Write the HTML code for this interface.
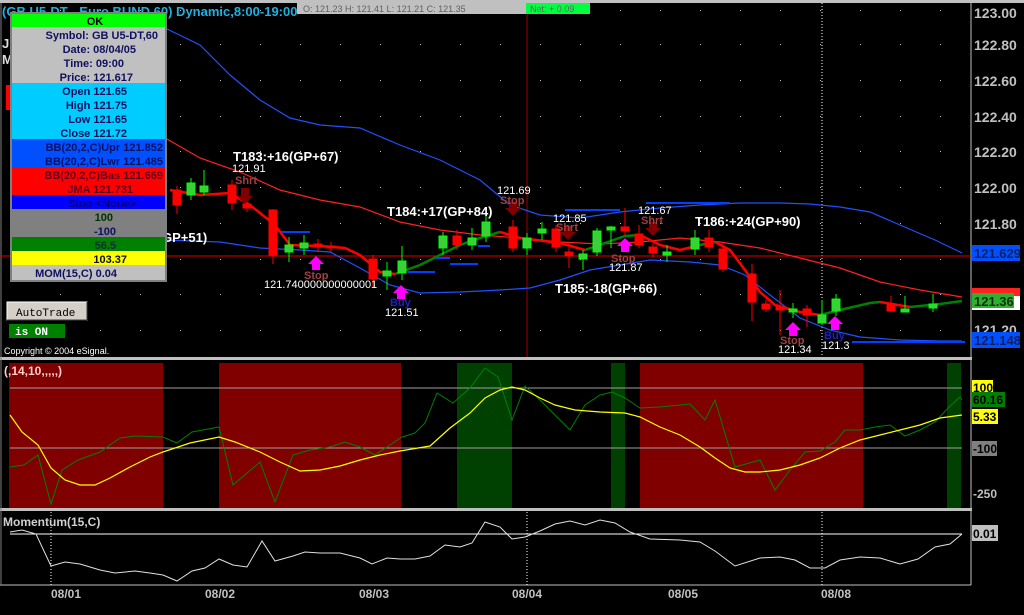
<!DOCTYPE html>
<html><head><meta charset="utf-8"><style>
html,body{margin:0;padding:0;background:#000;width:1024px;height:615px;overflow:hidden;font-family:"Liberation Sans",sans-serif}
svg{display:block}
</style></head><body>
<svg width="1024" height="615" viewBox="0 0 1024 615" xmlns="http://www.w3.org/2000/svg" font-family="Liberation Sans, sans-serif">
<rect width="1024" height="615" fill="#000"/>
<rect x="0" y="0" width="1024" height="3" fill="#c0c0c0"/>
<line x1="971" y1="3" x2="971" y2="585" stroke="#c0c0c0" stroke-width="1"/>
<rect x="0" y="357" width="972" height="3" fill="#c0c0c0"/>
<rect x="0" y="508" width="972" height="3" fill="#c0c0c0"/>
<line x1="0" y1="585" x2="971" y2="585" stroke="#c0c0c0"/>
<line x1="1" y1="3" x2="1" y2="585" stroke="#808080"/>

<rect x="9" y="363" width="154" height="145" fill="#800000"/>
<rect x="219" y="363" width="182" height="145" fill="#800000"/>
<rect x="457" y="363" width="55" height="145" fill="#004000"/>
<rect x="611" y="363" width="14" height="145" fill="#004000"/>
<rect x="640" y="363" width="223" height="145" fill="#800000"/>
<rect x="947" y="363" width="14" height="145" fill="#004000"/>
<line x1="10" y1="388" x2="962" y2="388" stroke="#a0a0a0"/>
<line x1="10" y1="448" x2="962" y2="448" stroke="#a0a0a0"/>

<g fill="#c0c0c0">
<g id="dr">
<rect x="60" y="0" width="1" height="1"/><rect x="100" y="0" width="1" height="1"/><rect x="140" y="0" width="1" height="1"/><rect x="180" y="0" width="1" height="1"/><rect x="220" y="0" width="1" height="1"/><rect x="260" y="0" width="1" height="1"/><rect x="300" y="0" width="1" height="1"/><rect x="340" y="0" width="1" height="1"/><rect x="380" y="0" width="1" height="1"/><rect x="420" y="0" width="1" height="1"/><rect x="460" y="0" width="1" height="1"/><rect x="500" y="0" width="1" height="1"/><rect x="540" y="0" width="1" height="1"/><rect x="580" y="0" width="1" height="1"/><rect x="620" y="0" width="1" height="1"/><rect x="660" y="0" width="1" height="1"/><rect x="700" y="0" width="1" height="1"/><rect x="740" y="0" width="1" height="1"/><rect x="780" y="0" width="1" height="1"/><rect x="820" y="0" width="1" height="1"/><rect x="860" y="0" width="1" height="1"/><rect x="900" y="0" width="1" height="1"/><rect x="940" y="0" width="1" height="1"/>
</g>
<use href="#dr" y="10"/><use href="#dr" y="44"/><use href="#dr" y="80"/><use href="#dr" y="116"/><use href="#dr" y="151"/><use href="#dr" y="187"/><use href="#dr" y="223"/><use href="#dr" y="259"/><use href="#dr" y="294"/><use href="#dr" y="330"/>
</g>
<line x1="527" y1="14" x2="527" y2="357" stroke="#a00000"/>
<line x1="527" y1="512" x2="527" y2="585" stroke="#fff" stroke-dasharray="1,2"/>
<line x1="822" y1="3" x2="822" y2="357" stroke="#fff" stroke-dasharray="1,2"/>
<line x1="822" y1="512" x2="822" y2="585" stroke="#fff" stroke-dasharray="1,2"/>
<line x1="51" y1="512" x2="51" y2="585" stroke="#fff" stroke-dasharray="1,2"/>
<line x1="0" y1="256" x2="971" y2="256" stroke="#e00000"/>

<polyline fill="none" stroke="#2050ff" stroke-width="1.2" points="165,28 200,45 230,75 260,100 290,118 320,125 360,128 400,145 440,160 480,180 510,205 540,215 580,218 620,212 660,208 700,205 740,203 780,203 810,204 840,207 870,212 900,225 935,240 962,253"/>
<polyline fill="none" stroke="#ff2020" stroke-width="1.2" points="160,135 200,158 240,172 280,190 320,200 360,207 400,222 440,230 480,235 520,238 560,242 600,244 640,242 680,238 720,242 760,248 800,258 840,268 880,282 920,290 962,297"/>
<polyline fill="none" stroke="#2050ff" stroke-width="1.2" points="165,240 220,242 260,248 300,250 330,252 360,268 390,285 420,293 460,292 500,290 530,288 560,280 590,270 620,265 650,260 690,262 720,265 745,275 770,295 800,318 830,330 860,337 900,340 940,341 962,341"/>
<g stroke="#0040ff" stroke-width="2">
<line x1="280" y1="232" x2="310" y2="232"/><line x1="408" y1="272" x2="435" y2="272"/><line x1="436" y1="258" x2="450" y2="258"/><line x1="450" y1="264" x2="478" y2="264"/><line x1="478" y1="246" x2="490" y2="246"/>
<line x1="565" y1="210" x2="620" y2="210"/><line x1="646" y1="203" x2="730" y2="203"/><line x1="852" y1="342" x2="965" y2="342"/>
</g>
<polyline fill="none" stroke="#ff0000" stroke-width="2.5" points="170,190 200,195 230,193 250,205 275,225 290,245 320,246 345,248 360,255 380,272 395,274"/>
<polyline fill="none" stroke="#008000" stroke-width="2.5" points="395,274 420,265 440,255 460,245 480,238 500,232"/>
<polyline fill="none" stroke="#ff0000" stroke-width="2.5" points="500,232 520,238 560,243 585,250"/>
<polyline fill="none" stroke="#008000" stroke-width="2.5" points="585,250 605,243 625,236 640,235"/>
<polyline fill="none" stroke="#ff0000" stroke-width="2.5" points="640,235 660,245 680,250 700,245"/>
<polyline fill="none" stroke="#008000" stroke-width="2.5" points="700,245 715,242"/>
<polyline fill="none" stroke="#ff0000" stroke-width="2.5" points="715,242 730,250 745,270 760,292 775,305 800,312 820,315"/>
<polyline fill="none" stroke="#008000" stroke-width="2.5" points="820,315 840,310 870,303 880,302"/>
<polyline fill="none" stroke="#ff0000" stroke-width="2.5" points="880,302 910,307"/>
<polyline fill="none" stroke="#008000" stroke-width="2.5" points="910,307 940,304 962,301"/>

<g stroke-width="1">
<g stroke="#00ff00" fill="#3bd03b">
<line x1="191" y1="178" x2="191" y2="200"/><rect x="187" y="183" width="8" height="12"/>
<line x1="204" y1="170" x2="204" y2="195"/><rect x="200" y="186" width="8" height="6"/>
<line x1="289" y1="237" x2="289" y2="262"/><rect x="285" y="245" width="8" height="7"/>
<line x1="304" y1="235" x2="304" y2="255"/><rect x="300" y="243" width="8" height="5"/>
<line x1="387" y1="262" x2="387" y2="290"/><rect x="383" y="271" width="8" height="5"/>
<line x1="402" y1="246" x2="402" y2="280"/><rect x="398" y="261" width="8" height="12"/>
<line x1="443" y1="232" x2="443" y2="255"/><rect x="439" y="236" width="8" height="12"/>
<line x1="472" y1="228" x2="472" y2="250"/><rect x="468" y="238" width="8" height="7"/>
<line x1="486" y1="214" x2="486" y2="242"/><rect x="482" y="222" width="8" height="14"/>
<line x1="527" y1="233" x2="527" y2="255"/><rect x="523" y="238" width="8" height="10"/>
<line x1="542" y1="222" x2="542" y2="240"/><rect x="538" y="229" width="8" height="4"/>
<line x1="583" y1="250" x2="583" y2="270"/><rect x="579" y="254" width="8" height="5"/>
<line x1="597" y1="228" x2="597" y2="256"/><rect x="593" y="231" width="8" height="21"/>
<line x1="611" y1="226" x2="611" y2="248"/><rect x="607" y="227" width="8" height="3"/>
<line x1="667" y1="245" x2="667" y2="262"/><rect x="663" y="252" width="8" height="3"/>
<line x1="695" y1="230" x2="695" y2="255"/><rect x="691" y="238" width="8" height="11"/>
<line x1="793" y1="303" x2="793" y2="318"/><rect x="789" y="309" width="8" height="3"/>
<line x1="822" y1="300" x2="822" y2="325"/><rect x="818" y="315" width="8" height="8"/>
<line x1="836" y1="294" x2="836" y2="316"/><rect x="832" y="299" width="8" height="12"/>
<line x1="905" y1="296" x2="905" y2="312"/><rect x="901" y="309" width="8" height="3"/>
<line x1="933" y1="294" x2="933" y2="312"/><rect x="929" y="304" width="8" height="4"/>
</g>
<g stroke="#ff0000" fill="#ff0000">
<line x1="177" y1="186" x2="177" y2="214"/><rect x="173" y="190" width="8" height="15"/>
<line x1="232" y1="180" x2="232" y2="210"/><rect x="228" y="185" width="8" height="18"/>
<line x1="247" y1="196" x2="247" y2="212"/><rect x="243" y="204" width="8" height="4"/>
<line x1="273" y1="209" x2="273" y2="264"/><rect x="269" y="210" width="8" height="45"/>
<line x1="318" y1="239" x2="318" y2="252"/><rect x="314" y="244" width="8" height="3"/>
<line x1="331" y1="242" x2="331" y2="252"/><rect x="327" y="246" width="8" height="2"/>
<line x1="373" y1="255" x2="373" y2="288"/><rect x="369" y="259" width="8" height="20"/>
<line x1="457" y1="230" x2="457" y2="250"/><rect x="453" y="236" width="8" height="9"/>
<line x1="513" y1="220" x2="513" y2="252"/><rect x="509" y="227" width="8" height="21"/>
<line x1="556" y1="225" x2="556" y2="252"/><rect x="552" y="229" width="8" height="18"/>
<line x1="569" y1="248" x2="569" y2="268"/><rect x="565" y="252" width="8" height="4"/>
<line x1="625" y1="208" x2="625" y2="235"/><rect x="621" y="227" width="8" height="4"/>
<line x1="639" y1="225" x2="639" y2="248"/><rect x="635" y="234" width="8" height="11"/>
<line x1="653" y1="244" x2="653" y2="258"/><rect x="649" y="247" width="8" height="6"/>
<line x1="709" y1="230" x2="709" y2="252"/><rect x="705" y="238" width="8" height="9"/>
<line x1="723" y1="245" x2="723" y2="272"/><rect x="719" y="249" width="8" height="20"/>
<line x1="752" y1="264" x2="752" y2="321"/><rect x="748" y="274" width="8" height="28"/>
<line x1="766" y1="300" x2="766" y2="312"/><rect x="762" y="304" width="8" height="5"/>
<line x1="780" y1="290" x2="780" y2="335"/><rect x="776" y="307" width="8" height="3"/>
<line x1="807" y1="305" x2="807" y2="327"/><rect x="803" y="309" width="8" height="6"/>
<line x1="891" y1="296" x2="891" y2="312"/><rect x="887" y="304" width="8" height="7"/>
</g>
</g>

<g fill="#ff00ff">
<polygon points="316,256 324,264 320,264 320,270 312,270 312,264 308,264"/>
<polygon points="401,285 409,293 405,293 405,299 397,299 397,293 393,293"/>
<polygon points="625,238 633,246 629,246 629,252 621,252 621,246 617,246"/>
<polygon points="793,322 801,330 797,330 797,336 789,336 789,330 785,330"/>
<polygon points="835,316 843,324 839,324 839,330 831,330 831,324 827,324"/>
</g>
<g fill="#800000">
<polygon points="245,204 253,196 249,196 249,188 241,188 241,196 237,196"/>
<polygon points="513,216 521,208 517,208 517,202 509,202 509,208 505,208"/>
<polygon points="568,240 576,232 572,232 572,226 564,226 564,232 560,232"/>
<polygon points="653,236 661,228 657,228 657,222 649,222 649,228 645,228"/>
</g>
<g font-size="11" fill="#fff">
<text x="232" y="172">121.91</text><text x="497" y="194">121.69</text><text x="553" y="222">121.85</text><text x="638" y="214">121.67</text>
<text x="264" y="288">121.740000000000001</text><text x="385" y="316">121.51</text><text x="609" y="271">121.87</text>
<text x="778" y="353">121.34</text><text x="822" y="349">121.3</text>
</g>
<g font-size="11" font-weight="bold" fill="#a04040">
<text x="235" y="184">Shrt</text><text x="500" y="204">Stop</text><text x="556" y="231">Shrt</text><text x="641" y="224">Shrt</text>
<text x="304" y="279">Stop</text><text x="611" y="262">Stop</text><text x="780" y="344">Stop</text>
</g>
<g font-size="11" font-weight="bold" fill="#2020c0"><text x="390" y="306">Buy</text><text x="824" y="339">Buy</text></g>
<g font-size="13" font-weight="bold" fill="#fff">
<text x="233" y="161">T183:+16(GP+67)</text><text x="387" y="216">T184:+17(GP+84)</text>
<text x="555" y="293">T185:-18(GP+66)</text><text x="695" y="226">T186:+24(GP+90)</text>
<text x="162" y="242">GP+51)</text>
</g>
<text x="4" y="354" font-size="9" fill="#fff">Copyright © 2004 eSignal.</text>

<text x="2" y="16" font-size="13" font-weight="bold" fill="#20b0e0">(GB U5-DT - Euro BUND 60) Dynamic,8:00-19:00</text>
<rect x="297" y="3" width="229" height="11" fill="#c0c0c0"/>
<text x="303" y="12" font-size="9" fill="#606060">O: 121.23     H: 121.41     L: 121.21     C: 121.35</text>
<rect x="526" y="3" width="64" height="11" fill="#00ff40"/>
<text x="530" y="12" font-size="9" fill="#606060">Net: + 0.09</text>
<text x="2" y="48" font-size="13" font-weight="bold" fill="#ddd">J</text>
<text x="2" y="64" font-size="13" font-weight="bold" fill="#ddd">M</text>
<rect x="6" y="85" width="5" height="25" fill="#ff0000"/>

<rect x="10" y="12" width="157" height="270" fill="#808080"/>
<g font-size="11" font-weight="bold" text-anchor="end">
<rect x="12" y="14" width="153" height="13" fill="#00ff00"/><text x="95" y="25" fill="#000" text-anchor="middle">OK</text>
<rect x="12" y="27" width="153" height="56" fill="#c0c0c0"/>
<text x="158" y="39" fill="#101060">Symbol: GB U5-DT,60</text>
<text x="136" y="53" fill="#101060">Date: 08/04/05</text>
<text x="124" y="67" fill="#101060">Time: 09:00</text>
<text x="133" y="81" fill="#101060">Price: 121.617</text>
<rect x="12" y="83" width="153" height="56" fill="#00ccff"/>
<text x="127" y="95" fill="#101060">Open 121.65</text><text x="127" y="109" fill="#101060">High 121.75</text>
<text x="127" y="123" fill="#101060">Low 121.65</text><text x="127" y="137" fill="#101060">Close 121.72</text>
<rect x="12" y="139" width="153" height="28" fill="#0050ff"/>
<text x="163" y="151" fill="#101060">BB(20,2,C)Upr 121.852</text><text x="163" y="165" fill="#101060">BB(20,2,C)Lwr 121.485</text>
<rect x="12" y="167" width="153" height="28" fill="#ff0000"/>
<text x="163" y="179" fill="#600020">BB(20,2,C)Bas 121.669</text><text x="133" y="193" fill="#600020">JMA 121.731</text>
<rect x="12" y="195" width="153" height="14" fill="#0000ff"/><text x="136" y="207" fill="#000080">Stop &lt;None&gt;</text>
<rect x="12" y="209" width="153" height="28" fill="#808080"/>
<text x="113" y="221" fill="#003000">100</text><text x="116" y="235" fill="#101060">-100</text>
<rect x="12" y="237" width="153" height="14" fill="#008000"/><text x="116" y="249" fill="#103030">56.5</text>
<rect x="12" y="251" width="153" height="14" fill="#ffff00"/><text x="127" y="263" fill="#101010">103.37</text>
<rect x="12" y="265" width="153" height="15" fill="#c0c0c0"/><text x="117" y="277" fill="#101060">MOM(15,C) 0.04</text>
</g>

<rect x="7" y="302" width="80" height="18" fill="#d4d0c8" stroke="#fff"/>
<line x1="7" y1="320" x2="87" y2="320" stroke="#404040"/><line x1="87" y1="302" x2="87" y2="320" stroke="#404040"/>
<text x="16" y="316" font-family="Liberation Mono, monospace" font-size="11" fill="#000">AutoTrade</text>
<rect x="9" y="324" width="56" height="14" fill="#008000"/>
<text x="15" y="335" font-family="Liberation Mono, monospace" font-size="11" font-weight="bold" fill="#fff">is ON</text>

<g font-size="14" font-weight="bold" fill="#c0c0c0">
<text x="974" y="18">123.00</text><text x="974" y="50">122.80</text><text x="974" y="86">122.60</text>
<text x="974" y="122">122.40</text><text x="974" y="157">122.20</text><text x="974" y="193">122.00</text>
<text x="974" y="229">121.80</text><text x="974" y="335">121.20</text>
</g>
<rect x="972" y="245" width="48" height="16" fill="#0050ff"/><text x="974" y="258" font-size="13" font-weight="bold" fill="#102060">121.629</text>
<rect x="972" y="288" width="48" height="22" fill="#fff"/><rect x="972" y="288" width="48" height="8" fill="#ff2020"/>
<rect x="972" y="293" width="42" height="15" fill="#30b030"/><text x="974" y="306" font-size="13" font-weight="bold" fill="#103010">121.36</text>
<rect x="972" y="332" width="48" height="16" fill="#0050ff"/><text x="974" y="345" font-size="13" font-weight="bold" fill="#102060">121.148</text>
<rect x="972" y="380" width="21" height="14" fill="#ffff00"/><text x="973" y="392" font-size="12" font-weight="bold" fill="#000">100</text>
<rect x="972" y="392" width="33" height="15" fill="#008000"/><text x="973" y="404" font-size="12" font-weight="bold" fill="#000">60.16</text>
<rect x="972" y="409" width="26" height="15" fill="#ffff00"/><text x="973" y="421" font-size="12" font-weight="bold" fill="#000">5.33</text>
<rect x="972" y="441" width="25" height="15" fill="#808080"/><text x="973" y="453" font-size="12" font-weight="bold" fill="#000">-100</text>
<text x="973" y="498" font-size="12" font-weight="bold" fill="#c0c0c0">-250</text>
<rect x="972" y="525" width="26" height="16" fill="#c0c0c0"/><text x="973" y="538" font-size="12" font-weight="bold" fill="#000">0.01</text>

<polyline fill="none" stroke="#008000" stroke-width="1" points="10,467 24,465 38,455 51,504 62,470 78,460 100,452 120,438 135,436 163,437 177,443 192,432 219,427 233,485 260,462 275,502 293,455 310,450 330,447 345,442 360,447 375,455 390,445 402,437 415,433 425,423 437,393 453,403 470,388 485,368 498,377 512,420 525,386 540,400 555,415 570,430 585,405 600,395 612,392 625,398 640,408 660,407 690,404 705,420 715,400 735,467 760,460 775,490 790,470 805,452 820,451 835,442 845,430 860,430 875,427 890,425 905,436 920,430 935,422 950,406 960,397 962,400"/>
<polyline fill="none" stroke="#ffff00" stroke-width="1.2" points="10,415 22,432 38,445 51,468 65,480 80,485 95,485 110,478 130,467 150,457 163,452 190,443 219,437 235,442 260,452 280,462 300,471 320,470 340,466 360,460 380,455 400,451 430,446 450,428 470,413 485,398 500,390 512,387 525,390 540,398 555,405 575,410 600,412 625,413 640,417 660,427 680,435 700,447 715,458 730,468 745,472 760,472 780,470 800,465 820,458 840,448 860,440 880,435 900,430 920,425 940,418 962,415"/>
<text x="4" y="375" font-size="12" font-weight="bold" fill="#ffcccc">(,14,10,,,,,)</text>

<line x1="10" y1="534" x2="962" y2="534" stroke="#fff"/>
<polyline fill="none" stroke="#e0e0e0" stroke-width="1" points="10,532 22,530 36,534 51,566 65,562 80,564 100,570 115,573 135,571 150,573 163,575 177,581 192,571 205,568 219,559 233,565 247,567 262,541 275,561 293,556 305,552 320,553 340,553 360,558 372,564 387,558 400,559 415,559 430,556 445,545 460,547 472,543 485,522 500,527 512,539 525,537 540,531 555,524 570,521 585,525 600,520 615,523 630,532 650,539 680,540 700,542 715,551 735,566 760,558 780,557 795,560 810,568 825,568 840,560 860,557 880,558 900,564 918,559 935,547 950,544 962,534"/>
<text x="3" y="526" font-size="12" font-weight="bold" fill="#d0d0d0">Momentum(15,C)</text>

<g font-size="12" font-weight="bold" fill="#c0c0c0">
<text x="51" y="598">08/01</text><text x="205" y="598">08/02</text><text x="359" y="598">08/03</text>
<text x="512" y="598">08/04</text><text x="668" y="598">08/05</text><text x="821" y="598">08/08</text>
</g>
</svg>
</body></html>
